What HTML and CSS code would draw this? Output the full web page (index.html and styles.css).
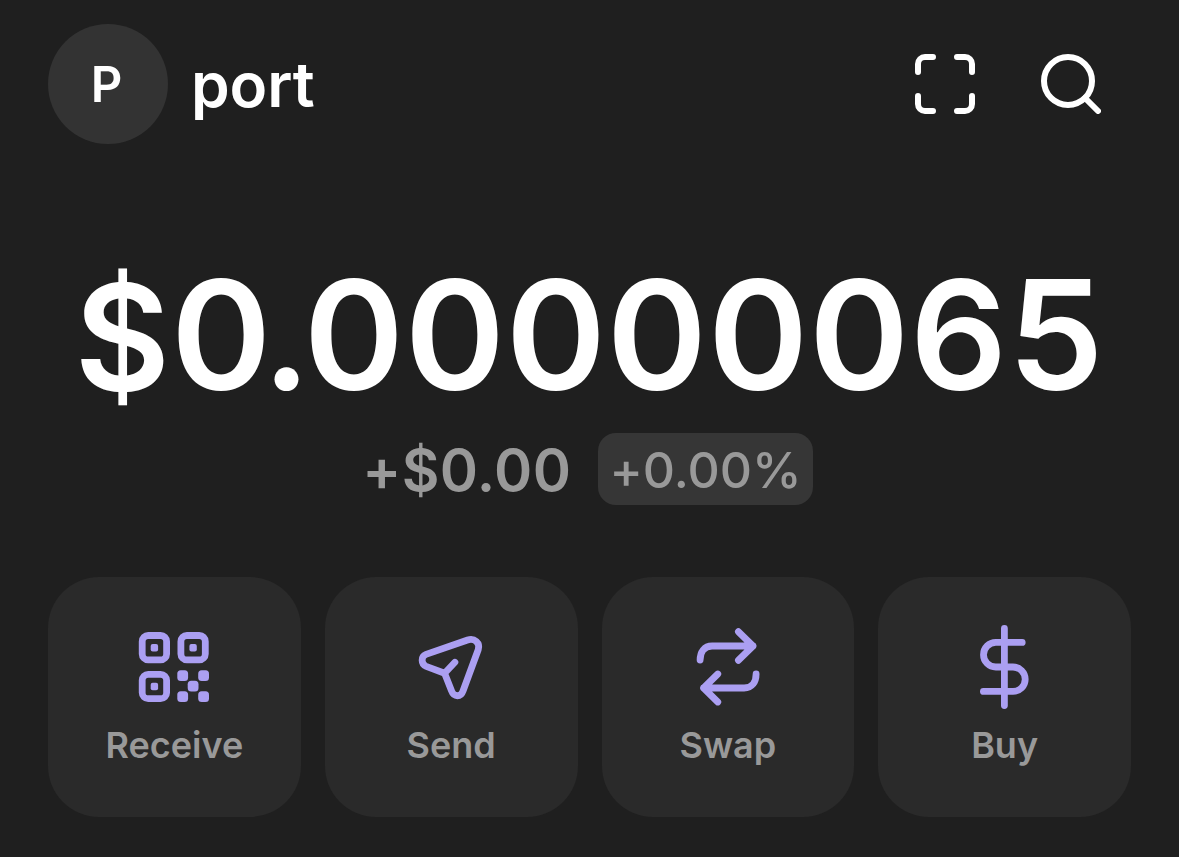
FILE: index.html
```
<!DOCTYPE html>
<html lang="en">
<head>
    <meta charset="UTF-8">
    <meta name="viewport" content="width=device-width, initial-scale=1.0">
    <title>Wallet</title>
    <link rel="stylesheet" href="styles.css">
</head>
<body>
    <header class="topbar">
        <div class="account">
            <div class="avatar">P</div>
            <span class="account-name">port</span>
        </div>
        <div class="topbar-icons">
            <svg class="top-icon" viewBox="0 0 60 60">
                <path d="M18 3H10a7 7 0 0 0-7 7v8M42 3h8a7 7 0 0 1 7 7v8M57 42v8a7 7 0 0 1-7 7h-8M18 57h-8a7 7 0 0 1-7-7v-8"/>
            </svg>
            <svg class="top-icon" viewBox="0 0 60 60">
                <circle cx="27" cy="27" r="24"/>
                <path d="M44 44L57 57"/>
            </svg>
        </div>
    </header>

    <main>
        <h1 class="balance"><span class="currency">$</span><span class="whole">0</span><span class="point">.</span>00000065</h1>
        <div class="change">
            <span class="change-value">+$0.00</span>
            <span class="change-badge">+0.00%</span>
        </div>

        <div class="actions">
            <button type="button" class="action">
                <svg class="action-icon" viewBox="0 0 84 84">
                    <rect x="10.2" y="10.5" width="24.4" height="24.4" rx="6"/>
                    <rect x="48.9" y="10.5" width="24.4" height="24.4" rx="6"/>
                    <rect x="10.2" y="49.3" width="24.4" height="24.4" rx="6"/>
                    <g class="filled">
                        <rect x="18.7" y="19" width="7.4" height="7.4" rx="2"/>
                        <rect x="57.4" y="19" width="7.4" height="7.4" rx="2"/>
                        <rect x="18.7" y="57.8" width="7.4" height="7.4" rx="2"/>
                        <rect x="45.3" y="45.3" width="10.8" height="10.8" rx="3.5"/>
                        <rect x="66.2" y="45.3" width="10.8" height="10.8" rx="3.5"/>
                        <rect x="55.7" y="55.8" width="10.8" height="10.8" rx="3.5"/>
                        <rect x="45.3" y="66.3" width="10.8" height="10.8" rx="3.5"/>
                        <rect x="66.2" y="66.3" width="10.8" height="10.8" rx="3.5"/>
                    </g>
                </svg>
                <span>Receive</span>
            </button>
            <button type="button" class="action">
                <svg class="action-icon" viewBox="0 0 84 84">
                    <path d="M17 29.4L58.6 15C65.5 12.8 71.5 18 69.2 24.8L54 66C52 72.3 44.8 72.3 42.6 66L35.6 48.3L17.2 41.4C11.8 39.2 11.8 31.3 17 29.4zM35.6 48.3L45.9 37.3"/>
                </svg>
                <span>Send</span>
            </button>
            <button type="button" class="action">
                <svg class="action-icon" viewBox="0 0 84 84">
                    <path d="M14.1 35c0-8 4-14 12-14H67M52.4 6.7L67 21L52.4 35.3"/>
                    <path d="M70.1 49c0 8-4 14-12 14H17.6M31.8 49L17.6 63L31.8 77"/>
                </svg>
                <span>Swap</span>
            </button>
            <button type="button" class="action">
                <svg class="action-icon" viewBox="0 0 84 84">
                    <path d="M41.4 3.4V80.6M59.2 17.4H32.8a12.3 12.3 0 0 0 0 24.6H50a12.2 12.2 0 0 1 0 24.4H20.4"/>
                </svg>
                <span>Buy</span>
            </button>
        </div>
    </main>
</body>
</html>
```

FILE: styles.css
```
* {
    box-sizing: border-box;
}

body {
    margin: 0;
    padding: 24px 48px 0;
    min-height: 857px;
    font-family: Inter, "Liberation Sans", sans-serif;
    font-feature-settings: "calt" 0;
    background-color: #1f1f1f;
    color: #fff;
}

svg {
    display: block;
    fill: none;
    stroke-linecap: round;
    stroke-linejoin: round;
}

.topbar {
    display: flex;
    align-items: center;
    justify-content: space-between;
    height: 120px;
    padding-right: 30px;
}

.account {
    display: flex;
    align-items: center;
    gap: 23px;
}

.avatar {
    display: flex;
    align-items: center;
    justify-content: center;
    width: 120px;
    height: 120px;
    padding-right: 3px;
    border-radius: 50%;
    background-color: #333;
    font-size: 49px;
    font-weight: 600;
}

.account-name {
    padding-top: 1px;
    font-size: 62px;
    font-weight: 620;
    letter-spacing: -0.1px;
}

.topbar-icons {
    display: flex;
    gap: 66px;
}

.top-icon {
    width: 60px;
    height: 60px;
    stroke: #fff;
    stroke-width: 6;
}

.balance {
    margin: 101px 0 0;
    font-size: 152px;
    font-weight: 600;
    line-height: 180px;
    letter-spacing: 0.8px;
    text-align: center;
    white-space: nowrap;
}

.currency {
    font-size: 147px;
    line-height: 1;
}

.whole {
    letter-spacing: -9px;
}

.point {
    letter-spacing: -7px;
}

.change {
    display: flex;
    align-items: center;
    justify-content: center;
    gap: 27px;
    height: 72px;
    margin-top: 8px;
    padding-right: 4px;
    color: #999;
}

.change-value {
    padding-top: 1px;
    font-size: 58px;
    font-weight: 600;
    letter-spacing: 0.4px;
}

.change-badge {
    height: 72px;
    padding: 0 11px;
    border-radius: 18px;
    background-color: #363636;
    font-size: 50px;
    font-weight: 550;
    line-height: 74px;
}

.actions {
    display: grid;
    grid-template-columns: repeat(4, 1fr);
    gap: 24px;
    margin-top: 72px;
}

.action {
    display: flex;
    flex-direction: column;
    align-items: center;
    height: 240px;
    padding: 48px 0 0;
    border: none;
    border-radius: 51px;
    background-color: #2a2a2a;
    color: #999;
    font-family: inherit;
    font-size: 36px;
    font-weight: 600;
    line-height: 44px;
    cursor: pointer;
}

.action-icon {
    width: 84px;
    height: 84px;
    margin-bottom: 14px;
    stroke: #ab9ff2;
    stroke-width: 6.8;
}

.filled {
    fill: #ab9ff2;
    stroke: none;
}
```
